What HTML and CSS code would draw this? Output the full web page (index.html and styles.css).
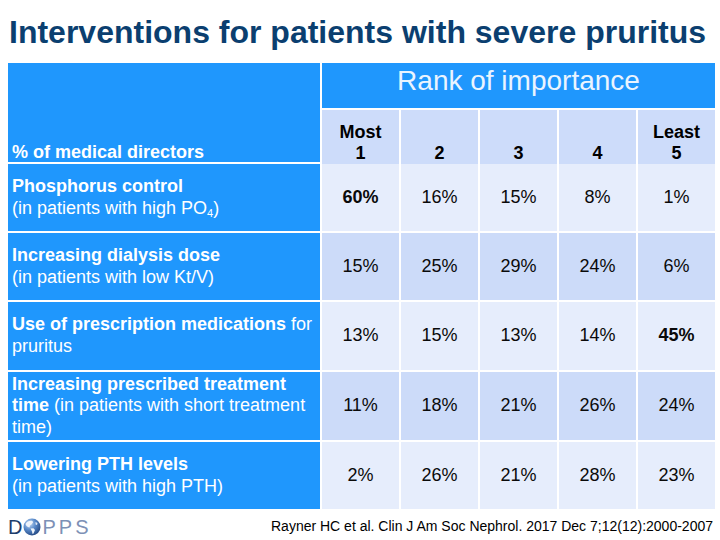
FILE: index.html
```html
<!DOCTYPE html>
<html>
<head>
<meta charset="utf-8">
<title>Interventions for patients with severe pruritus</title>
<link rel="stylesheet" href="styles.css">
</head>
<body>
<div class="page">
  <h1 class="title">Interventions for patients with severe pruritus</h1>

  <div class="grid">
    <div class="cell corner">% of medical directors</div>
    <div class="cell rank">Rank of importance</div>
    <div class="cell hd">Most<br>1</div>
    <div class="cell hd">2</div>
    <div class="cell hd">3</div>
    <div class="cell hd">4</div>
    <div class="cell hd">Least<br>5</div>

    <div class="cell label"><div><b>Phosphorus control</b><br>(in patients with high PO<sub>4</sub>)</div></div>
    <div class="cell num light"><b>60%</b></div>
    <div class="cell num light">16%</div>
    <div class="cell num light">15%</div>
    <div class="cell num light">8%</div>
    <div class="cell num light">1%</div>

    <div class="cell label"><div><b>Increasing dialysis dose</b><br>(in patients with low Kt/V)</div></div>
    <div class="cell num dark">15%</div>
    <div class="cell num dark">25%</div>
    <div class="cell num dark">29%</div>
    <div class="cell num dark">24%</div>
    <div class="cell num dark">6%</div>

    <div class="cell label"><div><b>Use of prescription medications</b> for pruritus</div></div>
    <div class="cell num light">13%</div>
    <div class="cell num light">15%</div>
    <div class="cell num light">13%</div>
    <div class="cell num light">14%</div>
    <div class="cell num light"><b>45%</b></div>

    <div class="cell label"><div><b>Increasing prescribed treatment time</b> (in patients with short treatment time)</div></div>
    <div class="cell num dark">11%</div>
    <div class="cell num dark">18%</div>
    <div class="cell num dark">21%</div>
    <div class="cell num dark">26%</div>
    <div class="cell num dark">24%</div>

    <div class="cell label"><div><b>Lowering PTH levels</b><br>(in patients with high PTH)</div></div>
    <div class="cell num light">2%</div>
    <div class="cell num light">26%</div>
    <div class="cell num light">21%</div>
    <div class="cell num light">28%</div>
    <div class="cell num light">23%</div>
  </div>

  <footer class="foot">
    <div class="logo">
      <span class="logo-d">D</span>
      <svg class="globe" width="18" height="18" viewBox="0 0 18 18">
        <defs>
          <radialGradient id="gl" cx="0.35" cy="0.3" r="0.8">
            <stop offset="0" stop-color="#c4dbf3"/>
            <stop offset="0.45" stop-color="#5a8bcb"/>
            <stop offset="1" stop-color="#1b3e78"/>
          </radialGradient>
        </defs>
        <circle cx="9" cy="9" r="8.5" fill="url(#gl)"/>
        <path d="M2.5 6 C4 3.2 7 2.4 9.5 3 L10 4.5 L8.5 6.5 L7 7.5 L6.5 9.5 L5 9 L3.5 8 Z" fill="#eef3fa"/>
        <path d="M7.5 10.5 L10.5 10.2 L12 12 L10.5 15.5 L9.5 16 L9 13.5 Z" fill="#eef3fa"/>
        <path d="M12.5 4 L14.5 5 L14 7 L12.5 6.5 Z" fill="#dfe8f4"/>
      </svg>
      <span class="logo-pps">PPS</span>
    </div>
    <div class="cite">Rayner HC et al. Clin J Am Soc Nephrol. 2017 Dec 7;12(12):2000-2007</div>
  </footer>
</div>
</body>
</html>
```

FILE: styles.css
```css
html, body {
  margin: 0;
  padding: 0;
  background: #ffffff;
}

body {
  font-family: "Liberation Sans", Arial, sans-serif;
  color: #000;
}

.page {
  width: 720px;
  height: 540px;
  overflow: hidden;
  display: flex;
  flex-direction: column;
}

.title {
  margin: 0;
  height: 63px;
  padding: 1px 0 0 9px;
  box-sizing: border-box;
  display: flex;
  align-items: center;
  font-size: 32px;
  font-weight: bold;
  color: #0b3f70;
  white-space: nowrap;
}

.grid {
  margin-left: 8px;
  width: 707px;
  display: grid;
  grid-template-columns: 312px repeat(5, 77px);
  grid-template-rows: 45px 52px 67px 67px 68px 68px 67px;
  gap: 2px;
  background: #ffffff;
}

.cell {
  display: flex;
  box-sizing: border-box;
  font-size: 18px;
  line-height: 21.6px;
}

.corner {
  grid-row: span 2;
  background: #1f97fd;
  color: #ffffff;
  font-weight: bold;
  align-items: flex-end;
  padding: 0 0 0 4px;
  line-height: 19px;
}

.rank {
  grid-column: span 5;
  background: #1f97fd;
  color: #eaf4ff;
  font-size: 28px;
  line-height: 31px;
  justify-content: center;
  align-items: flex-start;
  padding-top: 2px;
}

.hd {
  background: #cddcfa;
  font-weight: bold;
  text-align: center;
  justify-content: center;
  align-items: flex-end;
  color: #000;
  line-height: 21px;
  padding-bottom: 0;
  margin-bottom: -2px;
}

.label {
  background: #1f97fd;
  color: #ffffff;
  align-items: center;
  padding: 0 4px;
}

.label sub {
  font-size: 11px;
  line-height: 0;
  vertical-align: -3px;
}

.num {
  justify-content: center;
  align-items: center;
  color: #0a0a0a;
}

.light {
  background: #e6edfc;
}

.dark {
  background: #ccdbf9;
}

.foot {
  flex: 1;
  display: flex;
  justify-content: space-between;
  align-items: center;
  padding: 0 7px 0 8px;
}

.logo {
  display: flex;
  align-items: center;
  margin-top: 4px;
}

.logo-d {
  font-size: 20px;
  color: #1d3d6c;
  line-height: 1;
}

.globe {
  margin: 0 1px 0 1px;
}

.logo-pps {
  font-size: 20px;
  color: #7d91b6;
  letter-spacing: 3px;
  line-height: 1;
}

.cite {
  font-size: 14px;
  color: #000;
  white-space: nowrap;
  margin-top: 2px;
}
```
